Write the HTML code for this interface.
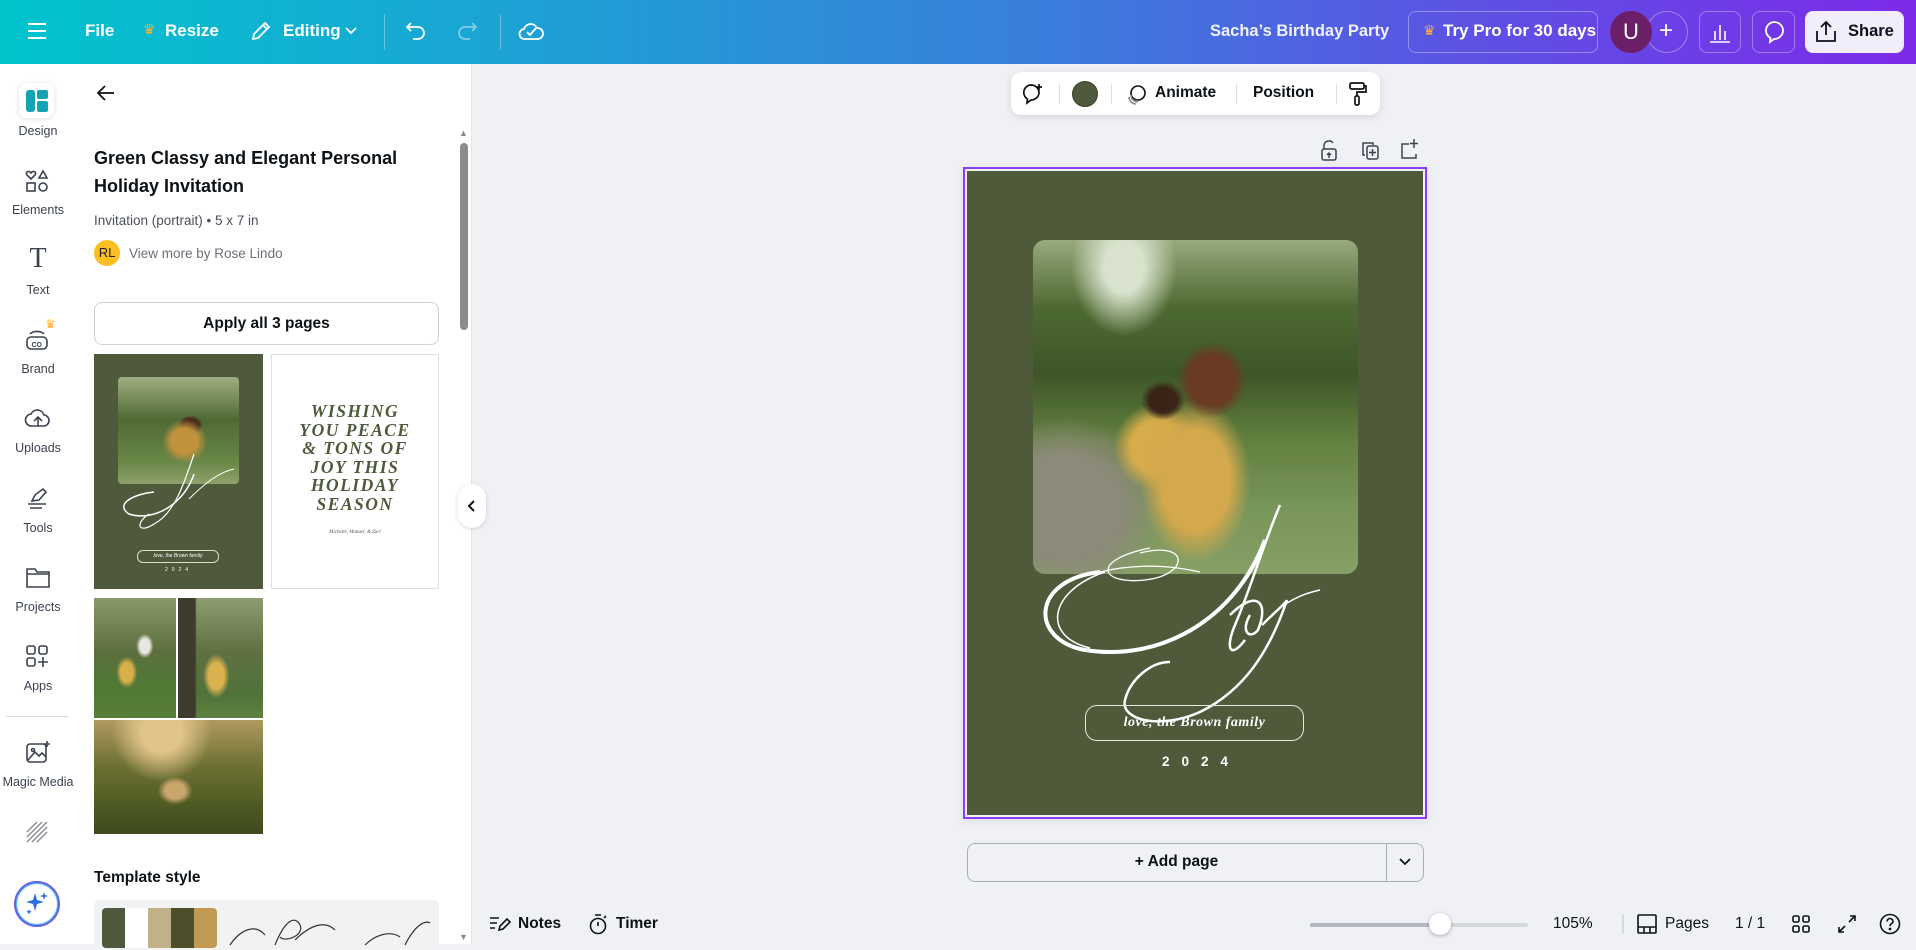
<!DOCTYPE html>
<html><head><meta charset="utf-8"><style>
*{box-sizing:border-box;margin:0;padding:0}
body{width:1916px;height:944px;overflow:hidden;background:#f0f1f5;font-family:"Liberation Sans",sans-serif;position:relative;color:#0d1216}
.a{position:absolute}
.top{left:0;top:0;width:1916px;height:64px;background:linear-gradient(90deg,#00c4cc 0%,#1aa5d4 25%,#3b7ddc 55%,#5a55e4 75%,#7d2ae8 100%)}
.tw{color:#fff;font-weight:bold;font-size:17px}
.rail{left:0;top:64px;width:76px;height:880px;background:#fff}
.rl{width:76px;text-align:center;font-size:12.5px;color:#3c4250}
.ri{left:24px;width:28px;height:28px}
.panel{left:76px;top:64px;width:396px;height:880px;background:#fff;border-right:1px solid #e4e5e9}
svg{overflow:visible}
.bb{color:#0d1216;font-size:15.5px;font-weight:bold}
</style></head><body>
<div class="a top"></div>
<svg class="a" style="left:27px;top:22px" width="20" height="18" stroke="#fff" stroke-width="2"><path d="M1 2h18M1 9h18M1 16h18"/></svg>
<div class="a tw" style="left:85px;top:21px">File</div>
<div class="a" style="left:143px;top:21px;color:#ffb02e;font-size:14px">♛</div>
<div class="a tw" style="left:165px;top:21px">Resize</div>
<svg class="a" style="left:250px;top:20px" width="22" height="22" fill="none" stroke="#fff" stroke-width="1.8"><path d="M3 19l1-5L15 3l4 4L8 18z M13 5l4 4"/></svg>
<div class="a tw" style="left:283px;top:21px">Editing</div>
<svg class="a" style="left:345px;top:27px" width="12" height="8" fill="none" stroke="#fff" stroke-width="1.8"><path d="M1 1l5 5 5-5"/></svg>
<div class="a" style="left:384px;top:14px;width:1px;height:36px;background:rgba(255,255,255,.3)"></div>
<svg class="a" style="left:405px;top:20px" width="22" height="22" fill="none" stroke="#fff" stroke-width="1.8"><path d="M6 3L2 7l4 4M2 7h11a6 6 0 010 12H8"/></svg>
<svg class="a" style="left:456px;top:20px" width="22" height="22" fill="none" stroke="rgba(255,255,255,.45)" stroke-width="1.8"><path d="M16 3l4 4-4 4M20 7H9a6 6 0 000 12h5"/></svg>
<div class="a" style="left:500px;top:14px;width:1px;height:36px;background:rgba(255,255,255,.3)"></div>
<svg class="a" style="left:518px;top:18px" width="26" height="24" fill="none" stroke="#fff" stroke-width="1.8"><path d="M7 21a5 5 0 01-1-10 7 7 0 0113-1 5 5 0 011 11z M9 14l3 3 6-7"/></svg>
<div class="a" style="left:1210px;top:22px;color:#fff;font-size:16.5px;font-weight:bold;opacity:.92">Sacha’s Birthday Party</div>
<div class="a" style="left:1408px;top:11px;width:190px;height:42px;border:1px solid rgba(255,255,255,.35);border-radius:8px"></div>
<div class="a" style="left:1423px;top:22px;color:#ffb02e;font-size:14px">♛</div>
<div class="a tw" style="left:1443px;top:21px">Try Pro for 30 days</div>
<div class="a" style="left:1646px;top:11px;width:42px;height:42px;border:1px solid rgba(255,255,255,.35);border-radius:50%"></div>
<div class="a" style="left:1610px;top:11px;width:42px;height:42px;background:#6a1f67;border-radius:50%;color:#fff;font-size:22px;text-align:center;line-height:42px">U</div>
<div class="a" style="left:1659px;top:17px;color:#fff;font-size:24px">+</div>
<div class="a" style="left:1699px;top:11px;width:42px;height:42px;border:1px solid rgba(255,255,255,.35);border-radius:8px"></div>
<svg class="a" style="left:1709px;top:21px" width="22" height="22" stroke="#fff" stroke-width="1.6"><path d="M1 21h20M6 19V10M11 19V4M16 19V10"/></svg>
<div class="a" style="left:1752px;top:11px;width:43px;height:42px;border:1px solid rgba(255,255,255,.35);border-radius:8px"></div>
<svg class="a" style="left:1763px;top:20px" width="22" height="24" fill="none" stroke="#fff" stroke-width="1.8"><path d="M11 2a9 8.5 0 110 17l-4 3 .5-4A8.5 8.5 0 0111 2z"/></svg>
<div class="a" style="left:1805px;top:11px;width:99px;height:42px;background:#f1edfd;border-radius:8px"></div>
<svg class="a" style="left:1815px;top:20px" width="22" height="24" fill="none" stroke="#0d1216" stroke-width="1.8"><path d="M11 15V2M6 7l5-5 5 5M2 11v10h18V11"/></svg>
<div class="a" style="left:1848px;top:22px;font-size:16.5px;font-weight:bold">Share</div>

<div class="a rail"></div>
<div class="a" style="left:19px;top:83px;width:35px;height:35px;background:#fff;border-radius:8px;box-shadow:0 1px 6px rgba(0,0,0,.12)"></div>
<svg class="a" style="left:26px;top:90px" width="22" height="22"><rect x="0" y="0" width="9" height="22" rx="3" fill="#13a3b5"/><rect x="11" y="0" width="11" height="9" rx="2" fill="#13a3b5"/><rect x="11" y="11" width="11" height="11" rx="2" fill="#13a3b5"/></svg>
<div class="a rl" style="left:0;top:124px">Design</div>
<svg class="a ri" style="top:168px" fill="none" stroke="#3c4250" stroke-width="1.6"><path d="M7 11l-4-4a2 2 0 013-3l1 1 1-1a2 2 0 013 3z M19 3l4 7h-8z"/><rect x="3" y="15" width="8" height="8"/><circle cx="19" cy="19" r="4"/></svg>
<div class="a rl" style="left:0;top:203px">Elements</div>
<div class="a" style="left:24px;top:244px;width:28px;font-family:'Liberation Serif',serif;font-size:28px;color:#3c4250;text-align:center;line-height:30px">T</div>
<div class="a rl" style="left:0;top:283px">Text</div>
<svg class="a ri" style="top:326px" fill="none" stroke="#3c4250" stroke-width="1.6"><rect x="3" y="11" width="20" height="12" rx="4"/><path d="M6 8a8 5 0 0114 0"/><text x="7.5" y="21" font-size="7" fill="#3c4250" stroke="none" font-family="Liberation Sans" font-weight="bold">CO</text></svg>
<div class="a" style="left:45px;top:317px;color:#ffb02e;font-size:12px">♛</div>
<div class="a rl" style="left:0;top:362px">Brand</div>
<svg class="a ri" style="top:405px" fill="none" stroke="#3c4250" stroke-width="1.6"><path d="M8 21a6 6 0 01-1-12 7 7 0 0113 1 5 5 0 01-1 11z M14 21v-8M10 16l4-4 4 4"/></svg>
<div class="a rl" style="left:0;top:441px">Uploads</div>
<svg class="a ri" style="top:484px" fill="none" stroke="#3c4250" stroke-width="1.6"><path d="M8 17l3-6 8-6 3 3-7 8z M4 20h18M6 24h12"/></svg>
<div class="a rl" style="left:0;top:521px">Tools</div>
<svg class="a ri" style="top:564px" fill="none" stroke="#3c4250" stroke-width="1.6"><path d="M3 5h8l2 3h12v15H3z M3 10h22"/></svg>
<div class="a rl" style="left:0;top:600px">Projects</div>
<svg class="a ri" style="top:643px" fill="none" stroke="#3c4250" stroke-width="1.6"><rect x="3" y="3" width="8" height="8" rx="2"/><rect x="15" y="3" width="8" height="8" rx="2"/><rect x="3" y="15" width="8" height="8" rx="2"/><path d="M19 14v10M14 19h10"/></svg>
<div class="a rl" style="left:0;top:679px">Apps</div>
<div class="a" style="left:6px;top:716px;width:62px;height:1px;background:#d8dade"></div>
<svg class="a ri" style="top:739px" fill="none" stroke="#3c4250" stroke-width="1.6"><rect x="3" y="5" width="19" height="18" rx="3"/><path d="M4 21l7-8 4 4 3-3 4 4"/><circle cx="9" cy="11" r="1.5"/><path d="M23 2v6M20 5h6"/></svg>
<div class="a rl" style="left:0;top:775px">Magic Media</div>
<svg class="a ri" style="top:819px" stroke="#8a8e96" stroke-width="1.5"><path d="M3 13L13 3M3 18L18 3M3 23L23 3M8 23L23 8M13 23L23 13"/></svg>
<div class="a" style="left:14px;top:881px;width:46px;height:46px;border-radius:50%;border:2px solid #6b5ce8;background:#fff;box-shadow:0 0 0 1px #2fc1e0 inset"></div>
<svg class="a" style="left:24px;top:891px" width="26" height="26" fill="#2a6fe0"><path d="M11 2l2 7 7 2-7 2-2 7-2-7-7-2 7-2z"/><path d="M20 1l1 3 3 1-3 1-1 3-1-3-3-1 3-1z"/><path d="M5 18l.8 2 2 .8-2 .8-.8 2-.8-2-2-.8 2-.8z"/></svg>

<div class="a panel"></div>
<svg class="a" style="left:97px;top:85px" width="18" height="16" fill="none" stroke="#0d1216" stroke-width="1.8"><path d="M8 1L1 8l7 7M1 8h16"/></svg>
<div class="a" style="left:94px;top:144px;font-size:18px;font-weight:bold;line-height:28px;color:#0d1216">Green Classy and Elegant Personal<br>Holiday Invitation</div>
<div class="a" style="left:94px;top:213px;font-size:13.5px;color:#4b5058">Invitation (portrait) • 5 x 7 in</div>
<div class="a" style="left:94px;top:240px;width:26px;height:26px;border-radius:50%;background:#fbbf24;font-size:13px;line-height:26px;text-align:center;color:#222">RL</div>
<div class="a" style="left:129px;top:246px;font-size:13.5px;color:#6b7078">View more by Rose Lindo</div>
<div class="a" style="left:94px;top:302px;width:345px;height:43px;border:1px solid #cfd2d8;border-radius:8px;text-align:center;line-height:41px;font-size:15.5px;font-weight:bold">Apply all 3 pages</div>
<div class="a" style="left:94px;top:354px;width:169px;height:235px;background:#4e5a3b"></div>
<div class="a" style="left:118px;top:377px;width:121px;height:107px;border-radius:4px;background:radial-gradient(ellipse at 55% 60%,#c0923c 0 14%,transparent 24%),radial-gradient(ellipse at 60% 45%,#4a2c1c 0 8%,transparent 12%),linear-gradient(180deg,#9fae80 0%,#4f6a34 40%,#6a8848 80%,#8fa26a 100%)"></div>
<svg class="a" style="left:94px;top:354px" width="169" height="235" fill="none" stroke="#fff"><path d="M60 138C40 140 20 150 35 160C60 168 90 150 100 120" stroke-width="1.5"/><path d="M100 100C90 130 80 160 60 170C45 180 40 170 55 160" stroke-width="1.2"/><path d="M95 145C110 130 125 118 140 115" stroke-width="1"/></svg>
<div class="a" style="left:137px;top:550px;width:82px;height:13px;border:1px solid #dcdcc8;border-radius:6px;font-size:5px;color:#fff;text-align:center;line-height:11px;font-style:italic">love, the Brown family</div>
<div class="a" style="left:94px;top:567px;width:169px;text-align:center;font-size:5px;color:#fff;letter-spacing:4px">2024</div>
<div class="a" style="left:271px;top:354px;width:168px;height:235px;background:#fff;border:1px solid #dfe0e3"></div>
<div class="a" style="left:271px;top:402px;width:168px;text-align:center;font-family:'Liberation Serif',serif;font-style:italic;font-weight:bold;font-size:17.5px;line-height:18.5px;color:#4e5a3b;letter-spacing:1.5px">WISHING<br>YOU PEACE<br>&amp; TONS OF<br>JOY THIS<br>HOLIDAY<br>SEASON</div>
<div class="a" style="left:271px;top:530px;width:168px;text-align:center;font-family:'Liberation Serif',serif;font-style:italic;font-size:5px;color:#555">Michelle, Manuel, &amp; Zuri</div>
<div class="a" style="left:94px;top:598px;width:82px;height:120px;background:radial-gradient(ellipse at 40% 62%,#d8b04a 0 9%,transparent 15%),radial-gradient(ellipse at 62% 40%,#e8e6e0 0 7%,transparent 12%),linear-gradient(180deg,#8a9a6a 0%,#5d6f3e 45%,#4f7a34 75%,#587d3a 100%)"></div>
<div class="a" style="left:178px;top:598px;width:85px;height:120px;background:radial-gradient(ellipse at 45% 65%,#d9b14e 0 12%,transparent 20%),linear-gradient(90deg,#3e3a2c 0 20%,transparent 22%),linear-gradient(180deg,#8d9d72 0%,#5f7041 45%,#50733a 80%,#5f8040 100%)"></div>
<div class="a" style="left:94px;top:720px;width:169px;height:114px;background:radial-gradient(ellipse at 48% 62%,#c9a66c 0 8%,transparent 14%),radial-gradient(ellipse at 40% 10%,#e0c48a 0 14%,transparent 35%),linear-gradient(180deg,#b09a60 0%,#6e7034 40%,#4e5a22 75%,#3e4a1e 100%)"></div>
<div class="a" style="left:94px;top:869px;font-size:15.5px;font-weight:bold">Template style</div>
<div class="a" style="left:94px;top:900px;width:345px;height:50px;background:#f1f2f4;border-radius:6px"></div>
<div class="a" style="left:102px;top:908px;width:115px;height:40px;border-radius:4px;overflow:hidden;display:flex"><div style="flex:1;background:#4e5a3b"></div><div style="flex:1;background:#fff"></div><div style="flex:1;background:#bfb18a"></div><div style="flex:1;background:#4f4e2c"></div><div style="flex:1;background:#c09a55"></div></div>
<svg class="a" style="left:225px;top:915px" width="210" height="30" fill="none" stroke="#333" stroke-width="1.2"><path d="M5 30C15 15 30 8 40 20M50 30C60 5 70 0 75 10C80 20 60 28 55 22M70 25C85 10 100 5 110 15M140 30C150 20 165 15 175 22M180 30C190 10 200 5 205 8"/></svg>
<div class="a" style="left:459px;top:128px;color:#8a8a8a;font-size:9px">▲</div>
<div class="a" style="left:460px;top:143px;width:8px;height:187px;background:#8c8c8c;border-radius:4px"></div>
<div class="a" style="left:459px;top:932px;color:#8a8a8a;font-size:9px">▼</div>
<div class="a" style="left:458px;top:484px;width:28px;height:44px;background:#fff;border-radius:14px;box-shadow:0 1px 4px rgba(0,0,0,.15)"></div>
<svg class="a" style="left:468px;top:500px" width="8" height="12" fill="none" stroke="#0d1216" stroke-width="2"><path d="M6 1L1 6l5 5"/></svg>

<div class="a" style="left:1011px;top:72px;width:369px;height:43px;background:#fff;border-radius:10px;box-shadow:0 2px 8px rgba(0,0,0,.12)"></div>
<svg class="a" style="left:1021px;top:83px" width="22" height="22" fill="none" stroke="#0d1216" stroke-width="1.7"><path d="M10 2a8 7.5 0 110 15l-4 3 .5-4A7.5 7.5 0 0110 2z M18 1v6M15 4h6"/></svg>
<div class="a" style="left:1059px;top:84px;width:1px;height:20px;background:#dcdde0"></div>
<div class="a" style="left:1072px;top:81px;width:26px;height:26px;border-radius:50%;background:#4e5a3b;border:1px solid #3a4428"></div>
<div class="a" style="left:1111px;top:84px;width:1px;height:20px;background:#dcdde0"></div>
<svg class="a" style="left:1126px;top:83px" width="22" height="22" fill="none" stroke="#0d1216" stroke-width="1.6"><circle cx="12" cy="10" r="7"/><path d="M5 12a7 7 0 007 7M3 14a7 7 0 007 7" stroke="#888"/></svg>
<div class="a" style="left:1155px;top:84px;font-size:15.5px;font-weight:bold">Animate</div>
<div class="a" style="left:1236px;top:84px;width:1px;height:20px;background:#dcdde0"></div>
<div class="a" style="left:1253px;top:84px;font-size:15.5px;font-weight:bold">Position</div>
<div class="a" style="left:1336px;top:84px;width:1px;height:20px;background:#dcdde0"></div>
<svg class="a" style="left:1349px;top:82px" width="18" height="26" fill="none" stroke="#0d1216" stroke-width="1.7"><rect x="1" y="1" width="14" height="6" rx="1.5"/><path d="M15 4h2v6H8v4"/><rect x="6" y="14" width="4" height="9" rx="1.5"/></svg>
<svg class="a" style="left:1320px;top:140px" width="18" height="22" fill="none" stroke="#3c4250" stroke-width="1.5"><path d="M4 9V5a5 5 0 019-2"/><rect x="2" y="9" width="14" height="11" rx="2"/><path d="M9 18v-5M7 15l2-2 2 2"/></svg>
<svg class="a" style="left:1361px;top:141px" width="20" height="20" fill="none" stroke="#3c4250" stroke-width="1.5"><path d="M4 14H2V2h10v2"/><rect x="6" y="5" width="11" height="13" rx="2"/><path d="M11.5 8v7M8 11.5h7"/></svg>
<svg class="a" style="left:1400px;top:138px" width="20" height="22" fill="none" stroke="#3c4250" stroke-width="1.5"><path d="M9 6H2v14h14v-4M14 1v9M10 5.5h8"/></svg>

<div class="a" style="left:963px;top:167px;width:464px;height:652px;border:2px solid #8b3dff;box-shadow:0 2px 10px rgba(0,0,0,.08)"></div>
<div class="a" style="left:967px;top:171px;width:456px;height:644px;background:#4f5a3b"></div>
<div class="a" style="left:1033px;top:240px;width:325px;height:334px;border-radius:12px;overflow:hidden;background:
radial-gradient(ellipse at 40% 48%,#3a2418 0 5%,transparent 8%),
radial-gradient(ellipse at 55% 42%,#6a3a22 0 9%,transparent 14%),
radial-gradient(ellipse at 50% 72%,#d4a84c 0 15%,transparent 24%),
radial-gradient(ellipse at 38% 62%,#d6ac4a 0 9%,transparent 15%),
radial-gradient(ellipse at 10% 80%,#8c8a78 0 14%,transparent 24%),
radial-gradient(ellipse at 28% 8%,#d8e2cc 0 6%,transparent 16%),
linear-gradient(180deg,#98aa7e 0%,#4e6a32 20%,#3c5628 40%,#62803f 60%,#78955a 80%,#86a066 100%)"></div>
<svg class="a" style="left:0;top:0" width="1916" height="944" fill="none" stroke="#fff">
<path d="M1100 572C1030 580 1030 640 1085 650C1160 662 1235 620 1265 540" stroke-width="4"/>
<path d="M1105 572C1050 590 1040 636 1090 648" stroke-width="1.5"/>
<path d="M1280 505C1265 540 1250 590 1235 625C1225 648 1230 660 1245 640" stroke-width="2.5"/>
<path d="M1140 553C1190 540 1190 575 1145 580C1100 585 1090 560 1150 548" stroke-width="1.3"/>
<path d="M1100 572C1150 560 1190 570 1200 572" stroke-width="1.3"/>
<path d="M1230 615C1255 590 1270 600 1258 630C1250 640 1240 632 1250 615" stroke-width="2.5"/>
<path d="M1262 625C1275 612 1285 604 1287 600C1270 650 1245 690 1200 712C1160 730 1120 720 1125 700C1130 680 1150 662 1170 662" stroke-width="2.5"/>
<path d="M1275 612C1295 595 1312 592 1320 590" stroke-width="1.5"/>
</svg>
<div class="a" style="left:1085px;top:705px;width:219px;height:36px;border:1.5px solid #e6e6da;border-radius:12px;text-align:center;line-height:33px;color:#fff;font-family:'Liberation Serif',serif;font-style:italic;font-weight:bold;font-size:14px;letter-spacing:.5px">love, the Brown family</div>
<div class="a" style="left:967px;top:754px;width:456px;text-align:center;color:#fff;font-size:13.5px;font-weight:bold;letter-spacing:12px;padding-left:12px">2024</div>

<div class="a" style="left:967px;top:843px;width:457px;height:39px;border:1px solid #a9aeb6;border-radius:8px"></div>
<div class="a" style="left:1386px;top:843px;width:1px;height:39px;background:#a9aeb6"></div>
<div class="a" style="left:967px;top:853px;width:419px;text-align:center;font-size:15.5px;font-weight:bold">+ Add page</div>
<svg class="a" style="left:1399px;top:858px" width="12" height="8" fill="none" stroke="#0d1216" stroke-width="1.8"><path d="M1 1l5 5 5-5"/></svg>

<svg class="a" style="left:489px;top:914px" width="20" height="18" fill="none" stroke="#0d1216" stroke-width="1.6"><path d="M1 4h9M1 9h7M1 14h5M10 16l1-4 7-7 3 3-7 7z"/></svg>
<div class="a bb" style="left:518px;top:915px">Notes</div>
<svg class="a" style="left:588px;top:913px" width="20" height="22" fill="none" stroke="#0d1216" stroke-width="1.6"><circle cx="10" cy="13" r="7.5"/><path d="M7 2h6M10 13V9M16 5l2-2"/></svg>
<div class="a bb" style="left:616px;top:915px">Timer</div>
<div class="a" style="left:1310px;top:923px;width:218px;height:4px;border-radius:2px;background:#d5d8dd"></div>
<div class="a" style="left:1310px;top:923px;width:130px;height:4px;border-radius:2px;background:#b3b8c0"></div>
<div class="a" style="left:1429px;top:913px;width:22px;height:22px;border-radius:50%;background:#fff;box-shadow:0 1px 4px rgba(0,0,0,.3)"></div>
<div class="a" style="left:1553px;top:915px;font-size:15.5px">105%</div>
<div class="a" style="left:1622px;top:914px;width:2px;height:20px;background:#d5d8dd"></div>
<svg class="a" style="left:1637px;top:914px" width="20" height="20" fill="none" stroke="#0d1216" stroke-width="1.6"><rect x="1" y="1" width="18" height="18" rx="1"/><path d="M1 13h18M7 13v6M13 13v6"/></svg>
<div class="a" style="left:1665px;top:915px;font-size:15.5px">Pages</div>
<div class="a" style="left:1735px;top:915px;font-size:15.5px">1 / 1</div>
<svg class="a" style="left:1792px;top:915px" width="18" height="18" fill="none" stroke="#0d1216" stroke-width="1.6"><rect x="1" y="1" width="6" height="6" rx="1.5"/><rect x="11" y="1" width="6" height="6" rx="1.5"/><rect x="1" y="11" width="6" height="6" rx="1.5"/><rect x="11" y="11" width="6" height="6" rx="1.5"/></svg>
<svg class="a" style="left:1838px;top:915px" width="18" height="18" fill="none" stroke="#0d1216" stroke-width="1.6"><path d="M11 7l6-6M12 1h5v5M7 11l-6 6M1 12v5h5"/></svg>
<svg class="a" style="left:1879px;top:913px" width="22" height="22" fill="none" stroke="#0d1216" stroke-width="1.6"><circle cx="11" cy="11" r="9.5"/><path d="M8 8.5a3 3 0 116 0c0 2-3 2-3 4.5"/><circle cx="11" cy="16" r=".6" fill="#0d1216"/></svg>
</body></html>
